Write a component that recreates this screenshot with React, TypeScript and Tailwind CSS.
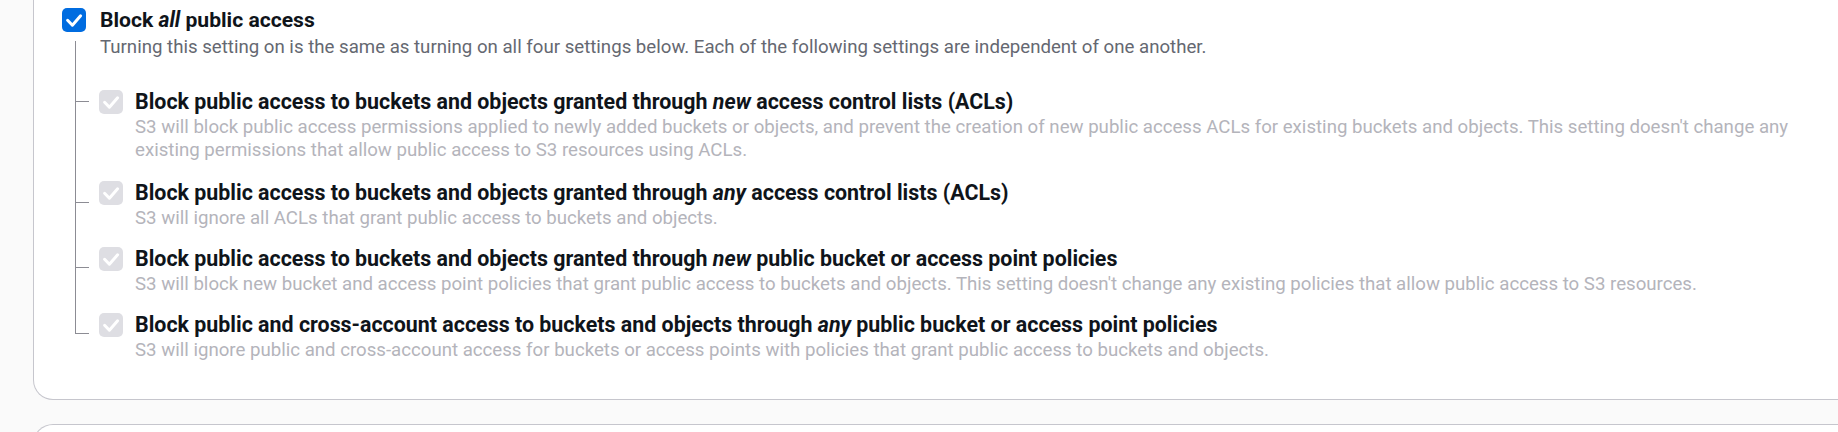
import React, { FC, ReactNode } from "react";

const CheckBox: FC<{ disabled?: boolean }> = ({ disabled }) => (
  <span
    className={
      disabled
        ? "flex h-[24px] w-[24px] shrink-0 items-center justify-center rounded-[5px] bg-[#dedee3]"
        : "flex h-[24px] w-[24px] shrink-0 items-center justify-center rounded-[5px] bg-[#006ce0]"
    }
  >
    <svg viewBox="0 0 24 24" className="h-[24px] w-[24px]">
      <path
        d="M5.6 12.3l4.8 4.9 8.2-9.4"
        fill="none"
        stroke="white"
        strokeWidth={3}
        strokeLinecap="round"
        strokeLinejoin="round"
      />
    </svg>
  </span>
);

interface SubProps {
  title: ReactNode;
  text: string;
  branch: string;
  last?: boolean;
  pad: string;
}

const SubSetting: FC<SubProps> = ({ title, text, branch, last, pad }) => {
  return (
    <div className="flex">
      <div className="flex w-[37px] shrink-0 flex-col pl-[13px]">
        <div className={`${branch} w-[14px] border-b border-l border-[#8c8c94]`} />
        {!last && <div className="flex-1 border-l border-[#8c8c94]" />}
      </div>
      <div className={`flex-1 ${pad}`}>
        <div className="flex items-center gap-[12px]">
          <CheckBox disabled />
          <h3 className="text-[21.4px] font-bold leading-[24px] text-[#0f141a]">{title}</h3>
        </div>
        <p className="mt-[2px] pl-[36px] text-[18.65px] leading-[23px] text-[#b4b4bb]">{text}</p>
      </div>
    </div>
  );
};

const App: FC = () => {
  return (
    <div className="h-[432px] w-[1838px] overflow-hidden bg-[#fafafa] pl-[33px] font-['Roboto','Liberation_Sans',sans-serif]">
      <div className="w-[1860px] rounded-b-[20px] border-x border-b border-[#c6c6cd] bg-white pb-[20px] pl-[28px] pr-[92px] pt-[8px]">
        <div className="flex items-start gap-[14px]">
          <CheckBox />
          <h2 className="text-[21.1px] font-bold leading-[24px] text-[#0f141a]">
            Block <i>all</i> public access
          </h2>
        </div>
        <div className="flex">
          <div className="flex w-[37px] shrink-0 flex-col pl-[13px] pt-[9px]">
            <div className="flex-1 border-l border-[#8c8c94]" />
          </div>
          <p className="pb-[31px] pl-[1px] pt-[4px] text-[18.65px] leading-[23px] text-[#656871]">
            Turning this setting on is the same as turning on all four settings below. Each of the following settings are independent of one another.
          </p>
        </div>
        <SubSetting
          branch="h-[12px]"
          pad="pb-[19px]"
          title={
            <>
              Block public access to buckets and objects granted through <i>new</i> access control lists (ACLs)
            </>
          }
          text="S3 will block public access permissions applied to newly added buckets or objects, and prevent the creation of new public access ACLs for existing buckets and objects. This setting doesn't change any existing permissions that allow public access to S3 resources using ACLs."
        />
        <SubSetting
          branch="h-[22px]"
          pad="pb-[17px]"
          title={
            <>
              Block public access to buckets and objects granted through <i>any</i> access control lists (ACLs)
            </>
          }
          text="S3 will ignore all ACLs that grant public access to buckets and objects."
        />
        <SubSetting
          branch="h-[21px]"
          pad="pb-[17px]"
          title={
            <>
              Block public access to buckets and objects granted through <i>new</i> public bucket or access point policies
            </>
          }
          text="S3 will block new bucket and access point policies that grant public access to buckets and objects. This setting doesn't change any existing policies that allow public access to S3 resources."
        />
        <SubSetting
          branch="h-[21px]"
          pad="pb-[17px]"
          last
          title={
            <>
              Block public and cross-account access to buckets and objects through <i>any</i> public bucket or access point policies
            </>
          }
          text="S3 will ignore public and cross-account access for buckets or access points with policies that grant public access to buckets and objects."
        />
      </div>
      <div className="mt-[24px] h-[40px] w-[1860px] rounded-t-[20px] border-x border-t border-[#c6c6cd] bg-white" />
    </div>
  );
};

export default App;
